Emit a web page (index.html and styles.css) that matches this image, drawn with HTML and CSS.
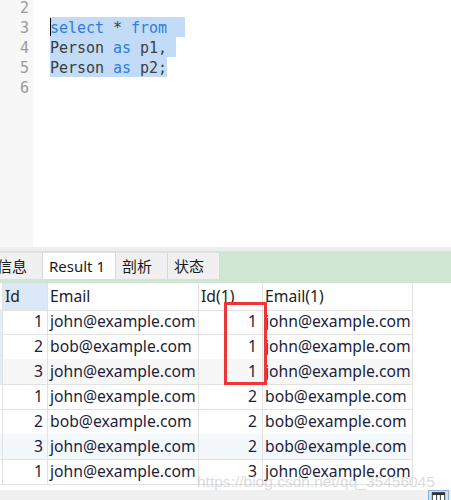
FILE: index.html
```html
<!DOCTYPE html>
<html>
<head>
<meta charset="utf-8">
<link rel="stylesheet" href="styles.css">
</head>
<body>
<div class="app">
  <div class="editor">
    <div class="gutter">
      <div class="ln">2</div>
      <div class="ln">3</div>
      <div class="ln">4</div>
      <div class="ln">5</div>
      <div class="ln">6</div>
    </div>
    <div class="code">
      <div class="line"></div>
      <div class="line"><span class="sel"><span class="cursor"></span><span class="kw">select</span> * <span class="kw">from</span>&nbsp;&nbsp;</span></div>
      <div class="line"><span class="sel">Person <span class="kw">as</span> p1,&nbsp;</span></div>
      <div class="line"><span class="sel">Person <span class="kw">as</span> p2;</span></div>
      <div class="line"></div>
    </div>
  </div>
  <div class="split"></div>
  <div class="tabbar">
    <div class="tab first">信息</div>
    <div class="tab active">Result 1</div>
    <div class="tab">剖析</div>
    <div class="tab">状态</div>
  </div>
  <div class="grid">
    <div class="row head">
      <div class="c c0"></div><div class="c cid hsel">Id</div><div class="c cem">Email</div><div class="c cid1">Id(1)</div><div class="c cem1">Email(1)</div>
    </div>
    <div class="row">
      <div class="c c0 lsel"></div><div class="c cid num">1</div><div class="c cem">john@example.com</div><div class="c cid1 num">1</div><div class="c cem1">john@example.com</div>
    </div>
    <div class="row">
      <div class="c c0 lsel"></div><div class="c cid num">2</div><div class="c cem">bob@example.com</div><div class="c cid1 num">1</div><div class="c cem1">john@example.com</div>
    </div>
    <div class="row gray">
      <div class="c c0 lsel"></div><div class="c cid num">3</div><div class="c cem">john@example.com</div><div class="c cid1 num">1</div><div class="c cem1">john@example.com</div>
    </div>
    <div class="row">
      <div class="c c0"></div><div class="c cid num">1</div><div class="c cem">john@example.com</div><div class="c cid1 num">2</div><div class="c cem1">bob@example.com</div>
    </div>
    <div class="row">
      <div class="c c0"></div><div class="c cid num">2</div><div class="c cem">bob@example.com</div><div class="c cid1 num">2</div><div class="c cem1">bob@example.com</div>
    </div>
    <div class="row blue">
      <div class="c c0"></div><div class="c cid num">3</div><div class="c cem">john@example.com</div><div class="c cid1 num">2</div><div class="c cem1">bob@example.com</div>
    </div>
    <div class="row">
      <div class="c c0"></div><div class="c cid num">1</div><div class="c cem">john@example.com</div><div class="c cid1 num">3</div><div class="c cem1">john@example.com</div>
    </div>
  </div>
  <div class="gap"></div>
  <div class="status">
    <span class="gridbtn">
      <svg width="20" height="14" viewBox="0 0 20 14">
        <rect x="3.5" y="3.5" width="13" height="10" fill="#fff" stroke="#333" stroke-width="1"/>
        <rect x="3.5" y="3.5" width="13" height="2.5" fill="#333"/>
        <line x1="8" y1="4" x2="8" y2="14" stroke="#333"/>
        <line x1="12" y1="4" x2="12" y2="14" stroke="#333"/>
      </svg>
    </span>
  </div>
  <div class="watermark">https://blog.csdn.net/qq_35456045</div>
  <div class="redbox"></div>
</div>
</body>
</html>
```

FILE: styles.css
```css
* { box-sizing: border-box; }
html, body { margin: 0; padding: 0; background: #fff; }
.app {
  position: relative;
  width: 451px;
  height: 500px;
  overflow: hidden;
  font-family: "Noto Sans", "Noto Sans CJK SC", sans-serif;
}
.editor {
  display: flex;
  height: 247px;
  background: #fff;
}
.gutter {
  width: 33px;
  background: #f7f7f7;
  margin-top: -3px;
  padding-right: 4px;
  font-family: "DejaVu Sans Mono", monospace;
  font-size: 15px;
  color: #9a9a9a;
  text-align: right;
}
.ln { height: 20px; line-height: 19px; padding-top: 2px; }
.code {
  flex: 1;
  margin-top: -3px;
  padding-left: 17px;
  font-family: "DejaVu Sans Mono", monospace;
  font-size: 15px;
  color: #3e3e3e;
  letter-spacing: -0.03px;
}
.line { height: 20px; line-height: 20px; white-space: pre; }
.sel {
  background: #c2dbf6;
  display: inline-block;
  height: 20px;
  padding-top: 2px;
  line-height: 19px;
  position: relative;
  vertical-align: top;
}
.kw { color: #2f7ce0; }
.cursor {
  position: absolute;
  left: 0;
  top: 1px;
  width: 1px;
  height: 18px;
  background: #000;
}
.split { height: 4px; background: #eeeeee; }
.tabbar {
  height: 32px;
  background: #cfe7d2;
  display: flex;
  align-items: flex-start;
  padding-top: 1px;
  font-size: 15px;
  color: #1a1a1a;
}
.tab {
  height: 27px;
  line-height: 26px;
  min-width: 52px;
  padding: 0 10px 0 6px;
  background: #f0f0f0;
  border-right: 1px solid #d8d8d8;
  border-top: 1px solid #e2e2e2;
  white-space: nowrap;
}
.tab.first { margin-left: -9px; }
.tab.active { background: #fff; }
.grid {
  font-size: 15.7px;
  color: #1c2238;
}
.row {
  display: grid;
  grid-template-columns: 3px 45px 151px 64px 150px;
  height: 25px;
}
.row.head { height: 26px; color: #222; }
.c {
  border-right: 1px solid #e2e2e2;
  border-bottom: 1px solid #e2e2e2;
  line-height: 25px;
  white-space: nowrap;
  overflow: visible;
  padding-left: 2px;
}
.row.head .c { line-height: 27px; }
.c0 { padding: 0; }
.lsel { background: #e3ecf7; }
.hsel { background: #dae8f7; }
.num { text-align: right; padding-right: 4px; padding-left: 0; }
.cid1.num { padding-right: 5px; }
.row.gray .c { background: #f7f7f7; }
.row.gray .c0 { background: #e3ecf7; }
.row.blue .c { background: #f3f8fd; }
.gap { height: 6px; }
.status {
  height: 10px;
  background: #f0f0f0;
  display: flex;
  justify-content: flex-end;
  padding-right: 2px;
}
.gridbtn {
  width: 21px;
  height: 14px;
  background: #cde2f7;
  border: 1px solid #86b1dc;
  display: flex;
  justify-content: center;
}
.gridbtn svg { display: block; margin-top: -2px; }
.watermark {
  position: absolute;
  left: 197px;
  top: 473px;
  font-family: "Liberation Sans", sans-serif;
  font-size: 15.5px;
  color: rgba(190, 190, 190, 0.55);
  white-space: nowrap;
}
.redbox {
  position: absolute;
  left: 224px;
  top: 302px;
  width: 43px;
  height: 83px;
  border: 3px solid #ef3535;
}
```
